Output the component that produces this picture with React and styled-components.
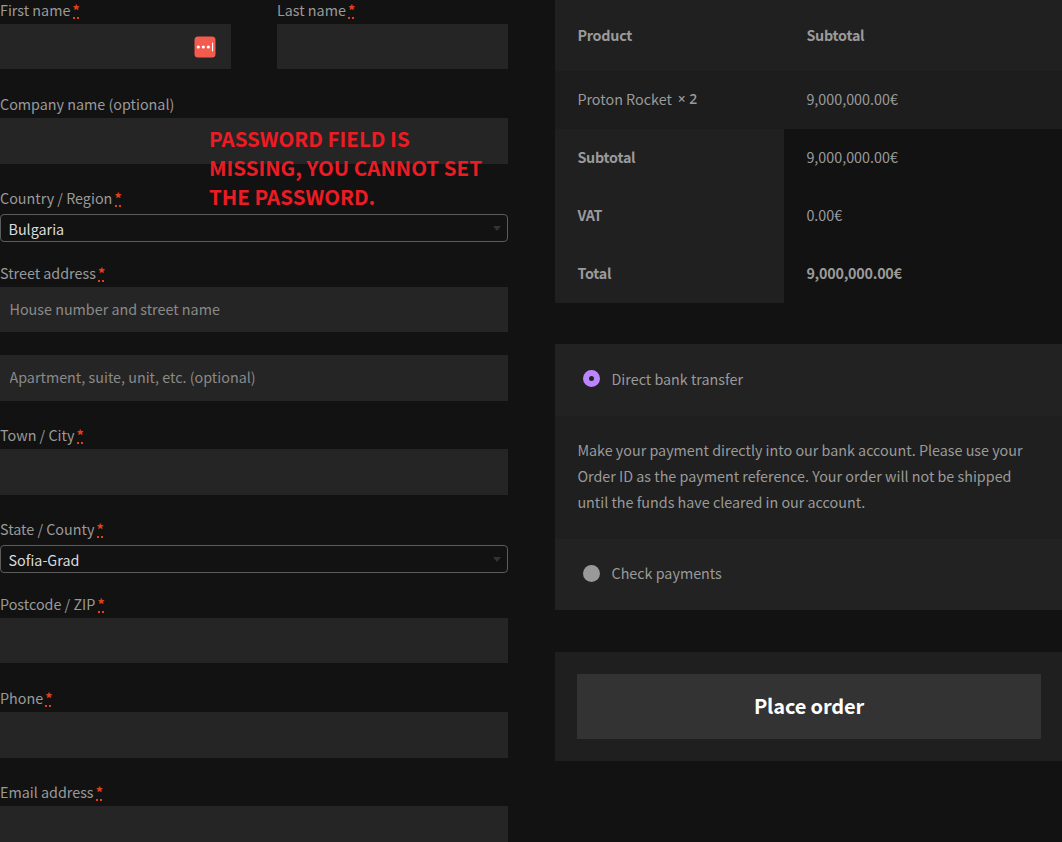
import React from 'react';
import styled, { createGlobalStyle } from 'styled-components';

const GlobalStyle = createGlobalStyle`
  * { box-sizing: border-box; }
  html, body { margin: 0; background: #121212; overflow: hidden; }
  body {
    font-family: "Noto Sans CJK SC", "Noto Sans", sans-serif;
    font-size: 14.33px;
    line-height: 26px;
    color: #9a9a9a;
  }
`;

const Page = styled.main`
  position: relative;
  display: grid;
  grid-template-columns: 508px 507px;
  column-gap: 47px;
  width: 1062px;
  height: 842px;
  overflow: hidden;
  background: #121212;
`;

const Form = styled.form`
  display: flex;
  flex-direction: column;
  margin-top: -4px;
`;

const NameRow = styled.div`
  display: grid;
  grid-template-columns: 231px 231px;
  column-gap: 46px;
`;

const Field = styled.div`
  display: flex;
  flex-direction: column;
  margin-top: ${(p) => p.$gap || 0}px;
`;

const Label = styled.label`
  display: flex;
  align-items: center;
  height: 28px;
  margin-bottom: ${(p) => (p.$select ? 2 : 0)}px;
  white-space: pre;
`;

const Star = styled.abbr`
  width: 7px;
  height: 18px;
  margin-left: 2.2px;
  line-height: 18px;
  font-weight: 700;
  color: #e2401c;
  text-decoration: none;
  background: repeating-linear-gradient(90deg, #e2401c 0 2px, transparent 2px 4px) 0 100% / 6px 2px no-repeat;
`;

const InputBox = styled.div`
  display: flex;
  align-items: center;
  justify-content: flex-end;
  height: ${(p) => p.$h || 46}px;
  background: #252525;
`;

const Input = styled.input`
  flex: 1;
  min-width: 0;
  height: 45px;
  align-self: flex-start;
  padding: 0 9.5px 2px;
  border: 0;
  outline: 0;
  background: transparent;
  font: inherit;
  color: #9a9a9a;
  &::placeholder { color: #8a8a8a; opacity: 1; }
`;

const ManagerIcon = styled.svg`
  flex: none;
  width: 22px;
  height: 22px;
  margin-right: 15px;
`;

const SelectBox = styled.div`
  display: flex;
  align-items: center;
  justify-content: space-between;
  height: 28px;
  padding: 2px 6px 0 7.5px;
  border: 1px solid #5c5c5c;
  border-radius: 4px;
  color: #dcdcdc;
`;

const Caret = styled.span`
  margin-top: -2px;
  border: 4px solid transparent;
  border-top: 5px solid #333;
  border-bottom: 0;
`;

const Summary = styled.section`
  display: flex;
  flex-direction: column;
`;

const OrderTable = styled.div`
  display: flex;
  flex-direction: column;
`;

const OrderRow = styled.div`
  display: grid;
  grid-template-columns: 229px 1fr;
  height: ${(p) => p.$h || 58}px;
  background: ${(p) => p.$bg || 'transparent'};
`;

const Cell = styled.div`
  display: flex;
  align-items: center;
  padding: 0 22px 2px 22.4px;
  background: ${(p) => (p.$head ? '#202020' : 'transparent')};
  font-weight: ${(p) => (p.$bold ? 700 : 400)};
  letter-spacing: ${(p) => (p.$bold ? '-0.24px' : 'normal')};
  white-space: pre;
`;

const Quantity = styled.strong`
  margin-left: 6px;
  font-family: "Open Sans", "Noto Sans", sans-serif;
  font-size: 13.8px;
  font-weight: 600;
`;

const Payments = styled.div`
  margin-top: 41px;
`;

const Method = styled.label`
  display: flex;
  align-items: center;
  height: ${(p) => p.$h}px;
  padding: 0 28px ${(p) => (p.$h === 71 ? 3 : 2)}px;
  gap: 11.5px;
  background: #222;
`;

const Radio = styled.span`
  width: 17px;
  height: 17px;
  border-radius: 50%;
  background: ${(p) => (p.$on ? '#222' : '#999')};
  border: ${(p) => (p.$on ? '6px solid #bb86fc' : '0')};
  margin-top: ${(p) => (p.$on ? -1 : 0)}px;
`;

const Description = styled.p`
  height: 123px;
  margin: 0;
  padding: 21px 22px 22px 22.4px;
  background: #1f1f1f;
  white-space: pre;
`;

const PlaceOrder = styled.div`
  display: flex;
  height: 109px;
  margin-top: 42px;
  padding: 22px 21px 22px 22px;
  background: #1f1f1f;
`;

const Button = styled.button`
  flex: 1;
  border: 0;
  padding: 0 0 2px;
  background: #333;
  color: #fff;
  font: 700 20px/30px "Noto Sans CJK SC", "Noto Sans", sans-serif;
  letter-spacing: -0.15px;
`;

const Note = styled.div`
  position: absolute;
  left: 209px;
  top: 124px;
  font: 700 20.5px/29px "Noto Sans CJK SC", sans-serif;
  color: #ed1c24;
  white-space: pre;
`;

function TextField({ label, required, gap, h, placeholder, icon }) {
  return (
    <Field $gap={gap}>
      {label && <Label>{label}{required && <Star>*</Star>}</Label>}
      <InputBox $h={h}>
        <Input placeholder={placeholder} />
        {icon}
      </InputBox>
    </Field>
  );
}

function SelectField({ label, value, gap }) {
  return (
    <Field $gap={gap}>
      <Label $select>{label}<Star>*</Star></Label>
      <SelectBox>{value}<Caret /></SelectBox>
    </Field>
  );
}

const passwordIcon = (
  <ManagerIcon viewBox="0 0 22 22">
    <rect x="0.5" y="0.5" width="21" height="21" rx="3.5" fill="#f45b4f" />
    <circle cx="4.3" cy="11" r="1.6" fill="#fff" />
    <circle cx="9.3" cy="11" r="1.6" fill="#fff" />
    <circle cx="14.3" cy="11" r="1.6" fill="#fff" />
    <rect x="18" y="6.7" width="1.1" height="8.6" fill="#fff" />
  </ManagerIcon>
);

const totals = [
  ['Subtotal', '9,000,000.00€'],
  ['VAT', '0.00€'],
  ['Total', '9,000,000.00€'],
];

export default function App() {
  return (
    <Page>
      <GlobalStyle />
      <Form>
        <NameRow>
          <TextField label="First name" required h={45} icon={passwordIcon} />
          <TextField label="Last name" required h={45} />
        </NameRow>
        <TextField label="Company name (optional)" gap={21} />
        <SelectField label="Country / Region" value="Bulgaria" gap={20} />
        <TextField label="Street address" required gap={17} h={45} placeholder="House number and street name" />
        <TextField gap={23} placeholder="Apartment, suite, unit, etc. (optional)" />
        <TextField label="Town / City" required gap={20} />
        <SelectField label="State / County" value="Sofia-Grad" gap={20} />
        <TextField label="Postcode / ZIP" required gap={17} h={45} />
        <TextField label="Phone" required gap={21} />
        <TextField label="Email address" required gap={20} />
      </Form>
      <Summary>
        <OrderTable>
          <OrderRow $h={71} $bg="#202020">
            <Cell $bold>Product</Cell>
            <Cell $bold>Subtotal</Cell>
          </OrderRow>
          <OrderRow $bg="#1d1d1d">
            <Cell>Proton Rocket<Quantity>× 2</Quantity></Cell>
            <Cell>9,000,000.00€</Cell>
          </OrderRow>
          {totals.map(([name, amount]) => (
            <OrderRow key={name}>
              <Cell $head $bold>{name}</Cell>
              <Cell $bold={name === 'Total'}>{amount}</Cell>
            </OrderRow>
          ))}
        </OrderTable>
        <Payments>
          <Method $h={72}><Radio $on />Direct bank transfer</Method>
          <Description>
            {'Make your payment directly into our bank account. Please use your\nOrder ID as the payment reference. Your order will not be shipped\nuntil the funds have cleared in our account.'}
          </Description>
          <Method $h={71}><Radio />Check payments</Method>
        </Payments>
        <PlaceOrder><Button type="button">Place order</Button></PlaceOrder>
      </Summary>
      <Note>{'PASSWORD FIELD IS\nMISSING, YOU CANNOT SET\nTHE PASSWORD.'}</Note>
    </Page>
  );
}
